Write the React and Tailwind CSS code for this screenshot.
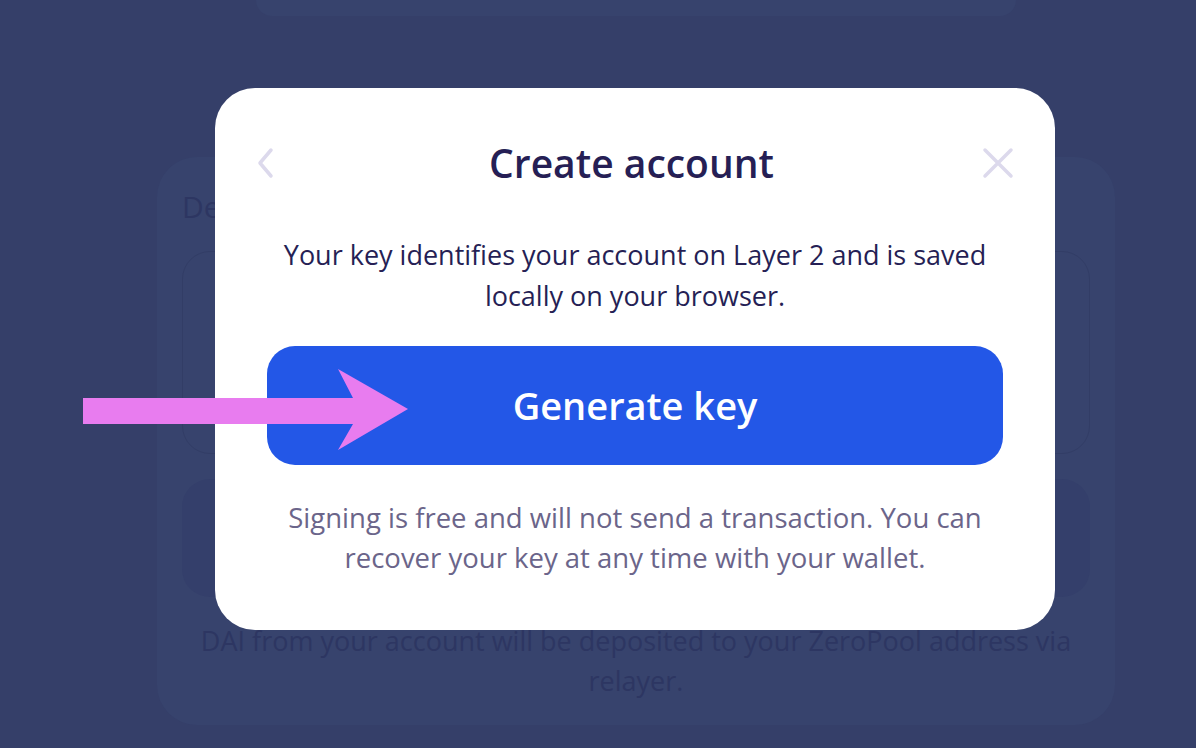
import React from "react";

export default function App() {
  const font = { fontFamily: "'Open Sans', 'Noto Sans', sans-serif" };
  return (
    <div className="relative w-[1196px] h-[748px] overflow-hidden bg-[#353f69]" style={font}>
      {/* background page (dimmed) */}
      <div className="flex flex-col items-center pl-[76px]">
        <div className="w-[760px] h-[16px] rounded-b-[40px] bg-[#37436d]" />
        <div className="mt-[141px] w-[958px] h-[568px] rounded-[40px] bg-[#37436d] px-[25px] pt-[30px]">
          <div className="text-[30px] text-[#2d3662] leading-[40px]">Deposit</div>
          <div className="mt-[24px] h-[203px] rounded-[28px] border border-[#323d66]" />
          <div className="mt-[25px] h-[118px] rounded-[28px] bg-[#343f6b]" />
          <div className="mt-[24px] text-center text-[27px] leading-[40px] text-[#2d3662] whitespace-nowrap">
            DAI from your account will be deposited to your ZeroPool address via
            <br />
            relayer.
          </div>
        </div>
      </div>

      {/* modal */}
      <div className="absolute left-[215px] top-[88px] w-[840px] h-[542px] rounded-[40px] bg-white flex flex-col items-center px-[52px]">
        <div className="w-full mt-[53px] flex items-center justify-between">
          <svg width="30" height="34" viewBox="0 0 30 34" className="ml-[-15px]">
            <path d="M19 4 L8 17 L19 30" fill="none" stroke="#dcd9ec" strokeWidth="3.5" strokeLinecap="round" strokeLinejoin="round" />
          </svg>
          <div className="text-[39px] font-semibold text-[#261f55] leading-[44px]">Create account</div>
          <svg width="34" height="34" viewBox="0 0 34 34" className="mr-[-12px]">
            <path d="M4 4 L30 30 M30 4 L4 30" fill="none" stroke="#dcd9ec" strokeWidth="3.5" strokeLinecap="round" />
          </svg>
        </div>
        <p className="mt-[49px] text-center text-[27px] leading-[41px] text-[#261f55] whitespace-nowrap">
          Your key identifies your account on Layer 2 and is saved
          <br />
          locally on your browser.
        </p>
        <button className="mt-[30px] w-[736px] h-[119px] rounded-[28px] bg-[#2357e7] text-white text-[38px] font-semibold">
          Generate key
        </button>
        <p className="mt-[33px] text-center text-[27.5px] leading-[40px] text-[#6b658a] whitespace-nowrap">
          Signing is free and will not send a transaction. You can
          <br />
          recover your key at any time with your wallet.
        </p>
      </div>

      {/* pink arrow annotation */}
      <svg className="absolute left-0 top-0" width="1196" height="748" viewBox="0 0 1196 748">
        <polygon points="83,398 353,398 338,369 408,409 338,450 353,424 83,424" fill="#e87cef" />
      </svg>
    </div>
  );
}
